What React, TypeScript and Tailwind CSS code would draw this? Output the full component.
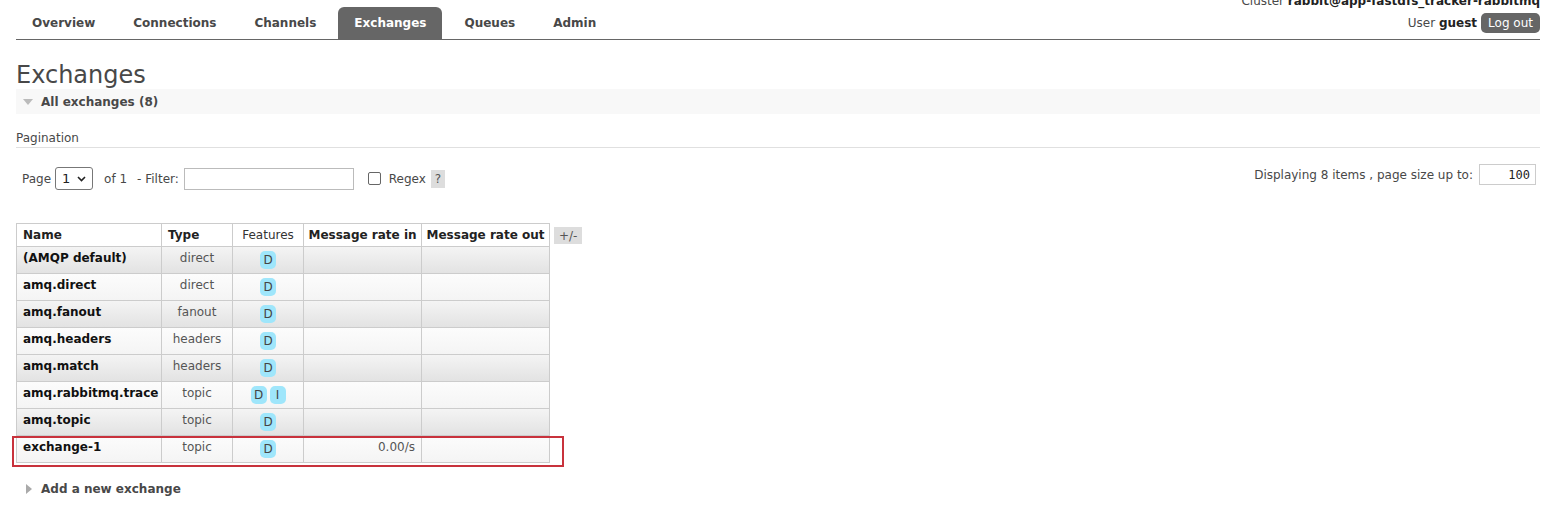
import React from "react";

const rows = [
  { name: "(AMQP default)", type: "direct", f: ["D"], rin: "" },
  { name: "amq.direct", type: "direct", f: ["D"], rin: "" },
  { name: "amq.fanout", type: "fanout", f: ["D"], rin: "" },
  { name: "amq.headers", type: "headers", f: ["D"], rin: "" },
  { name: "amq.match", type: "headers", f: ["D"], rin: "" },
  { name: "amq.rabbitmq.trace", type: "topic", f: ["D", "I"], rin: "" },
  { name: "amq.topic", type: "topic", f: ["D"], rin: "" },
  { name: "exchange-1", type: "topic", f: ["D"], rin: "0.00/s" },
];

const tabs = ["Overview", "Connections", "Channels", "Exchanges", "Queues", "Admin"];

export default function App() {
  return (
    <div
      className="w-[1559px] h-[513px] overflow-hidden bg-white pl-[16px] pr-[19px] text-[#484848]"
      style={{ fontFamily: '"DejaVu Sans", Verdana, sans-serif' }}
    >
      {/* Header */}
      <div className="flex justify-between items-end border-b border-[#666] h-[40px]">
        <div className="flex items-end gap-[6px]">
          {tabs.map((t) => (
            <div
              key={t}
              className={
                t === "Exchanges"
                  ? "h-[32px] px-[16px] flex items-center bg-[#666] text-white rounded-t-[6px] font-bold text-[12px]"
                  : "h-[32px] px-[16px] flex items-center font-bold text-[12px] text-[#484848]"
              }
            >
              {t}
            </div>
          ))}
        </div>
        <div className="flex flex-col items-end pb-[6px] text-[12px]">
          <div className="mt-[-13px] leading-[14px] whitespace-nowrap">
            Cluster <b className="text-[#222]">rabbit@app-fastdfs_tracker-rabbitmq</b>
          </div>
          <div className="flex items-center gap-[4px] mt-[5px]">
            <span>
              User <b className="text-[#222]">guest</b>
            </span>
            <span className="bg-[#666] text-white rounded-[5px] h-[20px] px-[7px] flex items-center">
              Log out
            </span>
          </div>
        </div>
      </div>

      <h1 className="text-[24px] leading-[28px] mt-[21px] text-[#484848]">Exchanges</h1>

      <div className="h-[25px] bg-[#f8f8f8] flex items-center">
        <svg width="10" height="6" viewBox="0 0 10 6" className="ml-[7px]">
          <path d="M0 0 L10 0 L5 6 Z" fill="#bbb" />
        </svg>
        <span className="ml-[8px] font-bold text-[12px] text-[#484848]">All exchanges (8)</span>
      </div>

      <div className="mt-[17px] text-[12px] leading-[15px] pb-[1px] border-b border-[#e0e0e0]">Pagination</div>

      <div className="flex justify-between items-start mt-[16px] text-[12px]">
        <div className="flex items-center ml-[6px] mt-[3px]">
          <span>Page</span>
          <div className="ml-[4px] w-[38px] h-[23px] border border-[#777] rounded-[3px] flex items-center justify-between px-[6px]">
            <span className="text-[13px] text-[#222]">1</span>
            <svg width="9" height="6" viewBox="0 0 9 6">
              <path d="M1 1 L4.5 4.5 L8 1" stroke="#222" strokeWidth="1.6" fill="none" />
            </svg>
          </div>
          <span className="ml-[11px]">of 1</span>
          <span className="ml-[10px]">- Filter:</span>
          <div className="ml-[5px] w-[170px] h-[22px] border border-[#bbb]" />
          <div className="ml-[14px] w-[13px] h-[13px] border border-[#666] rounded-[2px]" />
          <span className="ml-[8px]">Regex</span>
          <span className="ml-[5px] bg-[#ddd] w-[14px] h-[18px] flex items-center justify-center text-[#555] text-[12px]">
            ?
          </span>
        </div>
        <div className="flex items-center mr-[4px]">
          <span>Displaying 8 items , page size up to:</span>
          <div
            className="ml-[6px] w-[57px] h-[21px] border border-[#ccc] flex items-center justify-end pr-[5px] text-[12px] text-[#222]"
            style={{ fontFamily: '"DejaVu Sans Mono", monospace' }}
          >
            100
          </div>
        </div>
      </div>

      <div className="mt-[33px] flex items-start">
        <div className="relative">
          <table className="border-collapse text-[12px]">
            <thead>
              <tr className="h-[23px] bg-white">
                <th className="w-[145px] border border-[#ccc] text-left pl-[6px] font-bold text-[#222]">Name</th>
                <th className="w-[71px] border border-[#ccc] text-left pl-[6px] font-bold text-[#222]">Type</th>
                <th className="w-[71px] border border-[#ccc] font-normal text-[#333]">Features</th>
                <th className="w-[118px] border border-[#ccc] font-bold text-[#222]">Message rate in</th>
                <th className="w-[128px] border border-[#ccc] font-bold text-[#222]">Message rate out</th>
              </tr>
            </thead>
            <tbody>
              {rows.map((r, i) => (
                <tr
                  key={r.name}
                  className={
                    i % 2 === 0
                      ? "h-[27px] bg-gradient-to-b from-[#f4f4f4] to-[#e2e2e2]"
                      : "h-[27px] bg-gradient-to-b from-[#fcfcfc] to-[#f4f4f4]"
                  }
                >
                  <td className="border border-[#ccc] align-top pl-[6px] pt-[2px] font-bold text-[#111] whitespace-nowrap">
                    {r.name}
                  </td>
                  <td className="border border-[#ccc] align-top text-center pt-[2px] text-[#555]">{r.type}</td>
                  <td className="border border-[#ccc] align-top pt-[4px]">
                    <div className="flex justify-center gap-[3px]">
                      {r.f.map((x) => (
                        <span
                          key={x}
                          className="w-[16px] h-[18px] rounded-[5px] bg-[#9fe6fb] flex items-center justify-center text-[12px] text-[#444]"
                        >
                          {x}
                        </span>
                      ))}
                    </div>
                  </td>
                  <td className="border border-[#ccc] align-top text-right pr-[6px] pt-[2px] text-[#555]">{r.rin}</td>
                  <td className="border border-[#ccc]"></td>
                </tr>
              ))}
            </tbody>
          </table>
          <div className="absolute left-[-4px] right-[-14px] bottom-[-4px] h-[31px] border-2 border-[#c8323c] pointer-events-none" />
        </div>
        <span className="ml-[4px] mt-[4px] bg-[#ddd] h-[17px] px-[5px] flex items-center text-[12px] text-[#555]">
          +/-
        </span>
      </div>

      <div className="mt-[17px] flex items-center">
        <svg width="6" height="10" viewBox="0 0 6 10" className="ml-[10px]">
          <path d="M0 0 L6 5 L0 10 Z" fill="#aaa" />
        </svg>
        <span className="ml-[9px] font-bold text-[12px] text-[#484848]">Add a new exchange</span>
      </div>
    </div>
  );
}
